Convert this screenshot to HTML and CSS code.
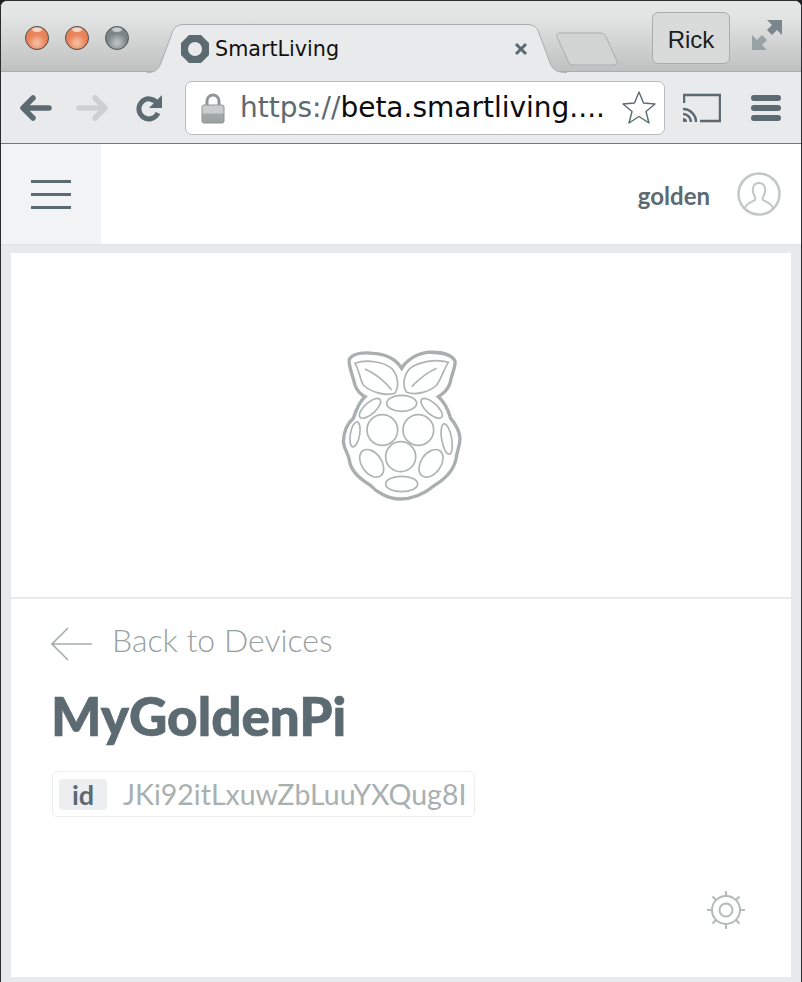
FILE: index.html
```html
<!DOCTYPE html>
<html>
<head>
<meta charset="utf-8">
<title>SmartLiving</title>
<link rel="stylesheet" href="styles.css">
</head>
<body>
<div class="window">
  <div class="tabstrip">
    <div class="lights">
      <span class="light"></span>
      <span class="light"></span>
      <span class="light off"></span>
    </div>
    <div class="tab">
      <svg class="tab-shape" width="420" height="49" viewBox="0 0 420 49">
        <path d="M0 48.5C8 48.5 11 46 14 39L25 9C27 3 31 .5 37 .5H380C386 .5 390 3 392 9L403 39C406 46 410 48.5 420 48.5" fill="#e9eaeb" stroke="#a9adad"/>
      </svg>
      <svg class="favicon" width="30" height="30" viewBox="0 0 30 30">
        <path d="M9 1H21L29 9V21L21 29H9L1 21V9Z M15 8A7 7 0 1 0 15 22A7 7 0 1 0 15 8Z" fill="#5c6a72" fill-rule="evenodd"/>
      </svg>
      <span class="tab-title">SmartLiving</span>
      <svg class="tab-close" width="14" height="14" viewBox="0 0 14 14">
        <path d="M2 2L12 12M12 2L2 12" stroke="#5c6a72" stroke-width="3"/>
      </svg>
    </div>
    <svg class="newtab" width="66" height="34" viewBox="0 0 66 34">
      <path d="M8 1H47C50 1 52 2 53 5L64 29C65 32 63 33 60 33H21C18 33 16 32 15 29L4 5C3 2 5 1 8 1Z" fill="#d2d4d3" stroke="#a9adad"/>
    </svg>
    <div class="profile">Rick</div>
    <svg class="fullscreen" width="30" height="30" viewBox="0 0 30 30">
      <path d="M30 0V15L25 10L20 15L15 10L20 5L15 0Z" fill="#7b878c"/>
      <path d="M0 30V15L5 20L10 15L15 20L10 25L15 30Z" fill="#98a1a3"/>
    </svg>
  </div>

  <div class="toolbar">
    <svg class="nav-icon" width="32" height="26" viewBox="0 0 32 26">
      <path d="M13 3L3 13L13 23M4 13H29" fill="none" stroke="#5c6a72" stroke-width="5.5" stroke-linecap="round" stroke-linejoin="round"/>
    </svg>
    <svg class="nav-icon" width="32" height="26" viewBox="0 0 32 26">
      <path d="M19 3L29 13L19 23M3 13H28" fill="none" stroke="#cdd0d1" stroke-width="5.5" stroke-linecap="round" stroke-linejoin="round"/>
    </svg>
    <svg class="nav-icon reload" width="28" height="28" viewBox="0 0 28 28">
      <path d="M22 9A10 10 0 1 0 23 19" fill="none" stroke="#5c6a72" stroke-width="5"/>
      <path d="M27 1V14H14Z" fill="#5c6a72"/>
    </svg>
    <div class="omnibox">
      <svg class="lock" width="24" height="32" viewBox="0 0 24 32">
        <defs>
          <linearGradient id="lockbody" x1="0" y1="0" x2="0" y2="1">
            <stop offset="0" stop-color="#c9cccc"/>
            <stop offset=".45" stop-color="#c9cccc"/>
            <stop offset=".5" stop-color="#a3a8a8"/>
            <stop offset="1" stop-color="#9ca1a1"/>
          </linearGradient>
        </defs>
        <path d="M6 14V9A6 6 0 0 1 18 9V14" fill="none" stroke="#8f9595" stroke-width="3"/>
        <rect x="1" y="13" width="22" height="18" rx="2" fill="url(#lockbody)" stroke="#8f9595"/>
      </svg>
      <span class="url"><span class="scheme">https://</span>beta.smartliving....</span>
      <svg class="star" width="36" height="36" viewBox="0 0 36 36">
        <path d="M18 2L22.5 13L34 14L25 21.500L28 33L18 26.500L8 33L11 21.500L2 14L13.500 13Z" fill="#fff" stroke="#5c6a72" stroke-width="1.400" stroke-linejoin="round"/>
      </svg>
    </div>
    <svg class="cast" width="38" height="30" viewBox="0 0 38 30">
      <path d="M1 10V2H37V28H17" fill="none" stroke="#5c6a72" stroke-width="2.500"/>
      <path d="M0 16A13 13 0 0 1 13 29M0 21A8 8 0 0 1 8 29" fill="none" stroke="#5c6a72" stroke-width="2.500"/>
      <path d="M0 25A4 4 0 0 1 4 29H0Z" fill="#5c6a72"/>
    </svg>
    <div class="chrome-menu">
      <span></span>
      <span></span>
      <span></span>
    </div>
  </div>

  <header class="appbar">
    <button class="menu-btn">
      <span></span>
      <span></span>
      <span></span>
    </button>
    <div class="username">golden</div>
    <svg class="avatar" width="44" height="44" viewBox="0 0 44 44">
      <circle cx="22" cy="22" r="20.500" fill="none" stroke="#c3c7c7" stroke-width="2.500"/>
      <path d="M8 36C10 31 15 30 18 28C19 26 18 25 17 23C15 19 15 11 22 11C29 11 29 19 27 23C26 25 25 26 26 28C29 30 34 31 36 36" fill="none" stroke="#c3c7c7" stroke-width="2"/>
    </svg>
  </header>

  <main class="content">
    <section class="card">
      <div class="hero">
        <svg class="logo" width="160" height="180" viewBox="0 0 480 540">
          <path class="logo-outline" d="M245 100C232 78 205 58 160 55C130 52 100 55 88 72C84 90 95 110 105 150C110 165 122 178 135 185C118 200 108 225 100 250C85 262 72 285 70 320C72 345 85 355 88 375C92 410 120 432 150 450C170 472 205 492 240 492C280 492 315 475 345 450C375 432 400 410 408 372C410 350 420 335 420 310C418 285 405 265 392 250C385 225 372 200 355 185C372 175 385 160 390 145C395 115 408 95 405 78C395 58 360 50 320 52C285 58 258 78 245 100Z"/>
          <g class="logo-lines">
            <path d="M105 85C140 72 190 80 215 100C232 118 240 150 225 175C195 185 150 170 130 150C118 130 118 105 105 85Z"/>
            <path d="M135 102C165 115 195 140 215 165"/>
            <path d="M385 82C350 70 295 80 270 100C252 118 245 150 260 172C290 182 330 170 350 150C365 130 370 105 385 82Z"/>
            <path d="M350 100C320 112 295 135 275 155"/>
            <circle cx="187" cy="285" r="46"/>
            <circle cx="295" cy="285" r="46"/>
            <circle cx="242" cy="365" r="45"/>
            <ellipse cx="245" cy="205" rx="45" ry="24"/>
            <ellipse cx="150" cy="220" rx="40" ry="17" transform="rotate(-42 150 220)"/>
            <ellipse cx="335" cy="220" rx="40" ry="17" transform="rotate(42 335 220)"/>
            <ellipse cx="105" cy="298" rx="14" ry="38" transform="rotate(10 105 298)"/>
            <ellipse cx="380" cy="312" rx="15" ry="46" transform="rotate(-10 380 312)"/>
            <ellipse cx="155" cy="385" rx="30" ry="46" transform="rotate(-35 155 385)"/>
            <ellipse cx="333" cy="385" rx="30" ry="46" transform="rotate(35 333 385)"/>
            <ellipse cx="245" cy="447" rx="48" ry="23"/>
          </g>
        </svg>
      </div>
      <div class="details">
        <a class="back-link">
          <svg width="41" height="34" viewBox="0 0 41 34">
            <path d="M17 1L1 17L17 33M1 17H41" fill="none" stroke="#a5adad" stroke-width="1.600"/>
          </svg>
          Back to Devices
        </a>
        <h1 class="device-name">MyGoldenPi</h1>
        <div class="id-chip">
          <span class="id-label">id</span>
          <span class="id-value">JKi92itLxuwZbLuuYXQug8I</span>
        </div>
        <div class="settings-row">
          <svg width="40" height="40" viewBox="0 0 40 40">
            <g fill="none" stroke="#b4b9b9">
              <circle cx="20" cy="20" r="14" stroke-width="2"/>
              <circle cx="20" cy="20" r="6.500" stroke-width="2"/>
              <path stroke-width="2" d="M20 6V1M20 34V39M6 20H1M34 20H39M10 10L6.500 6.500M30 10L33.500 6.500M10 30L6.500 33.500M30 30L33.500 33.500"/>
            </g>
          </svg>
        </div>
      </div>
    </section>
  </main>
</div>
</body>
</html>
```

FILE: styles.css
```css
* { box-sizing: border-box; }
html, body { margin: 0; padding: 0; }
body {
  width: 802px;
  height: 982px;
  background: #1d1f20;
  font-family: Lato, sans-serif;
  overflow: hidden;
}
svg { display: block; flex: none; }

.window {
  width: 802px;
  height: 982px;
  border: 1px solid #2a2c2d;
  border-bottom: 0;
  border-radius: 7px 7px 0 0;
  overflow: hidden;
  background: #e8e9ea;
  display: flex;
  flex-direction: column;
}

/* browser chrome */
.tabstrip {
  height: 71px;
  flex: none;
  display: flex;
  align-items: flex-start;
  background: linear-gradient(#e4e5e5 20%, #bfc1c0);
  border-bottom: 1px solid #a9adad;
}
.lights {
  display: flex;
  gap: 16px;
  padding: 25px 0 0 24px;
}
.light {
  width: 24px;
  height: 24px;
  border-radius: 50%;
  border: 1px solid #4d4a48;
  background:
    radial-gradient(ellipse 6px 3px at 50% 12%, #f5d8c8 60%, transparent),
    radial-gradient(circle at 50% 72%, #f3b89c 10%, #e8835a 45%);
}
.light.off {
  border-color: #4c5558;
  background:
    radial-gradient(ellipse 6px 3px at 50% 12%, #c9cdcd 60%, transparent),
    radial-gradient(circle at 50% 72%, #b9bdbd 10%, #7b8588 50%);
}
.tab {
  position: relative;
  width: 420px;
  height: 49px;
  margin: 23px 0 -1px 18px;
  display: flex;
  align-items: center;
  padding-left: 33px;
}
.tab-shape { position: absolute; left: 0; top: 0; }
.favicon, .tab-title, .tab-close { position: relative; }
.tab-title {
  margin-left: 5px;
  font: 20.700px "DejaVu Sans", sans-serif;
  color: #111;
  width: 299px;
}
.newtab { margin: 31px 0 0 -14px; }
.profile {
  width: 78px;
  height: 52px;
  margin: 11px 0 0 33px;
  border: 1px solid #a9adad;
  border-radius: 6px;
  font: 24px/54px "Liberation Sans", sans-serif;
  text-align: center;
  color: #1b1d1e;
  background: #d9dbda;
}
.fullscreen { margin: 19px 0 0 22px; }

.toolbar {
  height: 72px;
  flex: none;
  display: flex;
  align-items: center;
  padding-left: 19px;
  background: #e9eaeb;
  border-bottom: 1px solid #71797b;
}
.nav-icon + .nav-icon { margin-left: 24px; }
.nav-icon.reload { margin-left: 27px; }
.omnibox {
  width: 480px;
  height: 54px;
  margin-left: 22px;
  display: flex;
  align-items: center;
  padding-left: 15px;
  background: #fff;
  border: 1px solid #b9bdbd;
  border-radius: 7px;
}
.url {
  margin-left: 15px;
  width: 381px;
  font: 28px "DejaVu Sans", sans-serif;
  color: #0c0c0c;
  white-space: nowrap;
}
.scheme { color: #5c6a72; }
.cast { margin-left: 18px; }
.chrome-menu {
  width: 30px;
  margin-left: 30px;
  display: flex;
  flex-direction: column;
  gap: 4px;
}
.chrome-menu span {
  height: 6px;
  border-radius: 3px;
  background: #5c6a72;
}

/* app */
.appbar {
  height: 101px;
  flex: none;
  display: flex;
  align-items: center;
  background: #fff;
  border-bottom: 1px solid #e2e4e4;
}
.menu-btn {
  width: 100px;
  height: 100px;
  display: flex;
  flex-direction: column;
  justify-content: center;
  align-items: center;
  gap: 10px;
  padding: 0;
  border: 0;
  background: #f2f3f4;
  margin-right: auto;
}
.menu-btn span {
  width: 40px;
  height: 3px;
  background: #5c6a72;
}
.username {
  margin-top: 3px;
  font-size: 24px;
  font-weight: 700;
  color: #5c6a72;
}
.avatar { margin: 0 20px 0 27px; }

.content {
  flex: 1;
  padding: 8px 10px 5px;
}
.card {
  height: 100%;
  background: #fff;
  display: flex;
  flex-direction: column;
}
.hero {
  height: 346px;
  flex: none;
  display: flex;
  justify-content: center;
  padding: 82px 3px 0 0;
  border-bottom: 2px solid #e8e9ea;
}
.logo-outline {
  fill: none;
  stroke: #a9aeae;
  stroke-width: 10;
}
.logo-lines {
  fill: none;
  stroke: #aeb3b3;
  stroke-width: 5;
}
.details {
  flex: 1;
  padding: 18px 40px 0;
  display: flex;
  flex-direction: column;
}
.back-link {
  display: flex;
  align-items: center;
  gap: 20px;
  font-size: 32px;
  font-weight: 300;
  color: #98a1a1;
}
.back-link svg { margin-top: 10px; }
.device-name {
  margin: 24px 0 0;
  font-size: 53px;
  line-height: 62px;
  font-weight: 900;
  -webkit-text-stroke: .7px #5c6a72;
  color: #5c6a72;
}
.id-chip {
  width: 423px;
  height: 46px;
  margin: 24px 0 0 1px;
  display: flex;
  align-items: center;
  padding-left: 6px;
  border: 1px solid #eceeee;
  border-radius: 5px;
}
.id-label {
  width: 48px;
  height: 31px;
  text-align: center;
  font-size: 27px;
  line-height: 31px;
  font-weight: 700;
  color: #5c6a72;
  background: #eceeef;
  border-radius: 4px;
}
.id-value {
  margin-left: 16px;
  font-size: 28.500px;
  color: #a9b0b0;
  white-space: nowrap;
}
.settings-row {
  display: flex;
  justify-content: flex-end;
  margin: 73px 5px 0 0;
}
```
